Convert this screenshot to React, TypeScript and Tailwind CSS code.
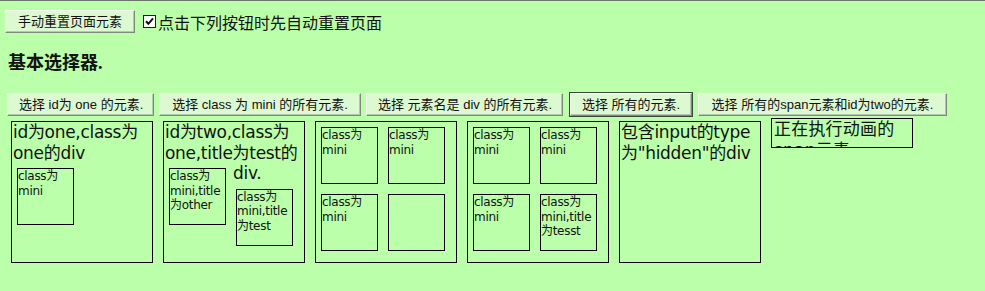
import React from 'react';

const btn =
  "h-[23px] px-[11px] text-[13px] leading-none text-[#111] bg-[#ddf9d2] border border-t-[#f6fff2] border-l-[#f6fff2] border-r-[#7d8a7b] border-b-[#7d8a7b] shadow-[inset_-1px_-1px_0_#b4c7b0] font-['Liberation_Sans','Noto_Sans_CJK_SC',sans-serif] whitespace-nowrap";

const boxFont = "font-['DejaVu_Sans','Noto_Sans_CJK_SC',sans-serif]";

const Mini: React.FC<{ text?: string; className?: string }> = ({ text, className = '' }) => (
  <div className={`w-[57px] h-[57px] border border-black text-[12px] leading-[14.5px] tracking-[-0.3px] overflow-hidden ${className}`}>
    {text}
  </div>
);

const Box: React.FC<{ children: React.ReactNode }> = ({ children }) => (
  <div className={`w-[142px] h-[142px] border border-black shrink-0 text-[17px] leading-[20.5px] tracking-[-0.3px] ${boxFont}`}>
    {children}
  </div>
);

export default function App() {
  return (
    <div className="w-full h-[291px] bg-[#bbffaa] border-t border-[#6d786b] text-[#111] overflow-hidden">
      {/* reset controls */}
      <div className="flex items-center pt-[9px] pl-[5px]">
        <button className={`${btn} h-[22px] w-[130px] px-0`}>手动重置页面元素</button>
        <label className="flex items-center ml-[8px] text-[16px] font-['Noto_Sans_CJK_SC',sans-serif]">
          <span className="w-[13px] h-[13px] border border-[#1c1c1c] bg-white flex items-center justify-center">
            <svg width="9" height="9" viewBox="0 0 9 9">
              <path d="M1 4.2 L3.4 6.8 L8 1.4" fill="none" stroke="#111" strokeWidth="2" />
            </svg>
          </span>
          <span className="ml-[2px] leading-none">点击下列按钮时先自动重置页面</span>
        </label>
      </div>

      <h3 className="mt-[19px] ml-[8px] text-[18px] leading-[22px] font-bold font-['Liberation_Serif','Noto_Sans_CJK_SC',serif]">
        基本选择器.
      </h3>

      {/* selector buttons */}
      <div className="flex mt-[19px] pl-[7px] gap-[5px]">
        <button className={`${btn} w-[147px] px-0`}>选择 id为 one 的元素.</button>
        <button className={`${btn} w-[202px] px-0`}>选择 class 为 mini 的所有元素.</button>
        <button className={`${btn} w-[197px] px-0`}>选择 元素名是 div 的所有元素.</button>
        <button className={`${btn} w-[122px] px-0 ml-[2px] outline outline-1 outline-[#3c463b]`}>选择 所有的元素.</button>
        <button className={`${btn} w-[249px] px-0 ml-[1px]`}>选择 所有的span元素和id为two的元素.</button>
      </div>

      {/* sample elements */}
      <div className="flex items-start mt-[5px] pl-[11px] gap-[10px]">
        <Box>
          <div className="pl-[1px]">id为one,class为<br />one的div</div>
          <Mini className="ml-[5px] mt-[5px]" text="class为mini" />
        </Box>

        <Box>
          <div className="pl-[1px]">id为two,class为<br />one,title为test的</div>
          <div className="flex">
            <Mini className="ml-[5px] mt-[5px]" text="class为mini,title为other" />
            <div className="ml-[5px]">
              <div className="pl-[2px]">div.</div>
              <Mini className="ml-[5px] mt-[5px]" text="class为mini,title为test" />
            </div>
          </div>
        </Box>

        <Box>
          <div className="grid grid-cols-[57px_57px] gap-[10px] pl-[5px] pt-[5px]">
            <Mini text="class为mini" />
            <Mini text="class为mini" />
            <Mini text="class为mini" />
            <Mini />
          </div>
        </Box>

        <Box>
          <div className="grid grid-cols-[57px_57px] gap-[10px] pl-[5px] pt-[5px]">
            <Mini text="class为mini" />
            <Mini text="class为mini" />
            <Mini text="class为mini" />
            <Mini text="class为mini,title为tesst" />
          </div>
        </Box>

        <Box>
          <div className="pl-[1px]">包含input的type<br />为"hidden"的div</div>
        </Box>

        {/* element mid-animation: height is clipped */}
        <div className={`-mt-[3px] w-[142px] h-[30px] border border-black overflow-hidden text-[17px] leading-[20.5px] tracking-[0.2px] pl-[2px] ${boxFont}`}>
          正在执行动画的span元素
        </div>
      </div>
    </div>
  );
}
